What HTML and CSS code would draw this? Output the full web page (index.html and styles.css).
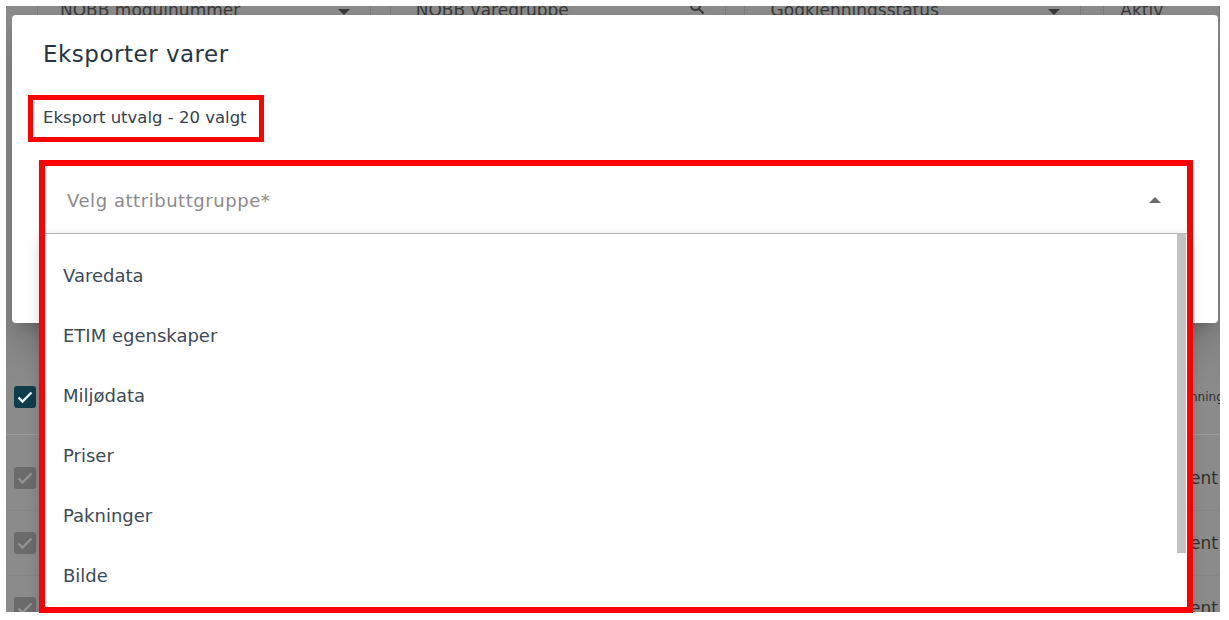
FILE: index.html
```html
<!DOCTYPE html>
<html lang="no">
<head>
<meta charset="utf-8">
<title>Eksporter varer</title>
<link rel="stylesheet" href="styles.css">
</head>
<body>
<div class="screen">
  <div class="bg-filters">
    <div class="bg-field f1"><span>NOBB modulnummer</span><span class="caret-down"></span></div>
    <div class="bg-field f2"><span>NOBB varegruppe</span>
      <svg class="bg-search" width="16" height="16" viewBox="0 0 16 16"><circle cx="6.5" cy="6.5" r="4.5" fill="none" stroke="#3a3a3a" stroke-width="2"/><path d="M10 10l4.5 4.5" stroke="#3a3a3a" stroke-width="2"/></svg>
    </div>
    <div class="bg-field f3"><span>Godkjenningsstatus</span><span class="caret-down"></span></div>
    <div class="bg-field f4"><span>Aktiv</span></div>
  </div>

  <div class="bg-table">
    <div class="bg-row bg-head">
      <span class="cb cb-on"><svg width="20" height="20" viewBox="0 0 20 20"><path d="M3.5 10.5l4 4L16.5 5.5" fill="none" stroke="#e9eef0" stroke-width="2.4"/></svg></span>
      <span class="bg-cell small">nning</span>
    </div>
    <div class="bg-row">
      <span class="cb"><svg width="20" height="20" viewBox="0 0 20 20"><path d="M3.5 10.5l4 4L16.5 5.5" fill="none" stroke="#939393" stroke-width="2.4"/></svg></span>
      <span class="bg-cell">ent</span>
    </div>
    <div class="bg-row">
      <span class="cb"><svg width="20" height="20" viewBox="0 0 20 20"><path d="M3.5 10.5l4 4L16.5 5.5" fill="none" stroke="#939393" stroke-width="2.4"/></svg></span>
      <span class="bg-cell">ent</span>
    </div>
    <div class="bg-row">
      <span class="cb"><svg width="20" height="20" viewBox="0 0 20 20"><path d="M3.5 10.5l4 4L16.5 5.5" fill="none" stroke="#939393" stroke-width="2.4"/></svg></span>
      <span class="bg-cell">ent</span>
    </div>
  </div>

  <div class="dialog">
    <h2 class="dialog-title">Eksporter varer</h2>
    <div class="selection-label">Eksport utvalg - 20 valgt</div>
    <div class="select-wrap">
      <div class="select">
        <span class="placeholder">Velg attributtgruppe*</span>
        <span class="caret-up"></span>
      </div>
      <div class="menu">
        <ul class="menu-list">
          <li>Varedata</li>
          <li>ETIM egenskaper</li>
          <li>Miljødata</li>
          <li>Priser</li>
          <li>Pakninger</li>
          <li>Bilde</li>
        </ul>
        <div class="scroll-track"><div class="scroll-thumb"></div></div>
      </div>
    </div>
  </div>
</div>

<div class="mark mark-label"></div>
<div class="mark mark-select"></div>
</body>
</html>
```

FILE: styles.css
```css
* { box-sizing: border-box; }

html, body {
  margin: 0;
  padding: 0;
  background: #ffffff;
  font-family: "DejaVu Sans", "Noto Sans", sans-serif;
}

.screen {
  position: relative;
  margin: 6px 0 0 6px;
  width: 1214px;
  height: 606px;
  overflow: hidden;
  background: #8b8b8b;
}

/* dimmed page behind the modal */
.bg-filters {
  display: flex;
  margin-top: -11px;
  height: 30px;
  color: #3a3a3a;
  font-size: 17px;
  line-height: 30px;
}

.bg-field {
  display: flex;
  align-items: center;
  justify-content: space-between;
  border-left: 1px solid #7c7c7c;
  border-right: 1px solid #7c7c7c;
  padding: 0 20px 0 22px;
}
.f1 { margin-left: 31px; width: 346px; }
.f2 { margin-left: 19px; width: 348px; padding-left: 25px; }
.f3 { margin-left: 18px; width: 350px; padding-left: 26px; }
.f4 { margin-left: 22px; width: 120px; padding-left: 16px; }

.caret-down {
  width: 0;
  height: 0;
  border-left: 6px solid transparent;
  border-right: 6px solid transparent;
  border-top: 6px solid #3a3a3a;
  margin-top: 4px;
}
.bg-search { margin-top: -6px; }

.bg-table {
  margin-top: 335px;
}
.bg-row {
  display: flex;
  align-items: center;
  justify-content: space-between;
  height: 65px;
  padding-left: 8px;
  border-bottom: 1px solid #868686;
}
.bg-head {
  height: 75px;
  margin-bottom: 11px;
  border-bottom: 1px solid #9a9a9a;
}
.cb {
  display: flex;
  align-items: center;
  justify-content: center;
  width: 22px;
  height: 22px;
  border-radius: 3px;
  background: #6b6b6b;
}
.cb-on { background: #0f3d4c; }
.bg-cell {
  width: 30px;
  overflow: hidden;
  white-space: nowrap;
  color: #303030;
  font-size: 17px;
}
.bg-cell.small { font-size: 12px; }

/* modal */
.dialog {
  position: absolute;
  left: 6px;
  top: 9px;
  width: 1206px;
  height: 308px;
  background: #ffffff;
  border-radius: 4px;
  padding: 24px 30px 0 30px;
  box-shadow: 0 11px 15px -7px rgba(0,0,0,0.2), 0 24px 38px 3px rgba(0,0,0,0.14);
}

.dialog-title {
  margin: 0 0 0 1px;
  font-size: 23px;
  letter-spacing: 0.5px;
  line-height: 31px;
  font-weight: normal;
  color: #283644;
}

.selection-label {
  margin: 37px 0 0 1px;
  font-size: 16.5px;
  line-height: 22px;
  color: #36414c;
}

.select-wrap {
  position: relative;
  margin-top: 37px;
}

.select {
  display: flex;
  align-items: center;
  justify-content: space-between;
  height: 68px;
  padding: 0 27px 0 25px;
  background: #ffffff;
  border-bottom: 1px solid #bdbdbd;
  box-shadow: 0 2px 4px rgba(0,0,0,0.08);
}
.placeholder {
  font-size: 18px;
  letter-spacing: 0.55px;
  color: #8c8c8c;
  padding-top: 2px;
}
.caret-up {
  width: 0;
  height: 0;
  border-left: 6px solid transparent;
  border-right: 6px solid transparent;
  border-bottom: 6px solid #6b6b6b;
}

.menu {
  position: absolute;
  top: 100%;
  left: 0;
  right: 0;
  height: 420px;
  display: flex;
  background: #ffffff;
  box-shadow: 0 6px 14px rgba(0,0,0,0.25);
  z-index: 2;
}
.menu-list {
  flex: 1;
  list-style: none;
  margin: 0;
  padding: 11px 0 0 0;
}
.menu-list li {
  display: flex;
  align-items: center;
  height: 60px;
  padding-left: 21px;
  font-size: 18px;
  color: #3e4a58;
}
.scroll-track {
  width: 11px;
  padding-right: 2px;
}
.scroll-thumb {
  width: 9px;
  height: 319px;
  background: #c2c2c2;
}

/* red annotation frames */
.mark {
  position: absolute;
  border: 5px solid #ff0000;
  pointer-events: none;
  z-index: 10;
}
.mark-label {
  left: 28px;
  top: 95px;
  width: 236px;
  height: 47px;
}
.mark-select {
  left: 39px;
  top: 160px;
  width: 1154px;
  height: 453px;
  border-width: 6px;
}
```
